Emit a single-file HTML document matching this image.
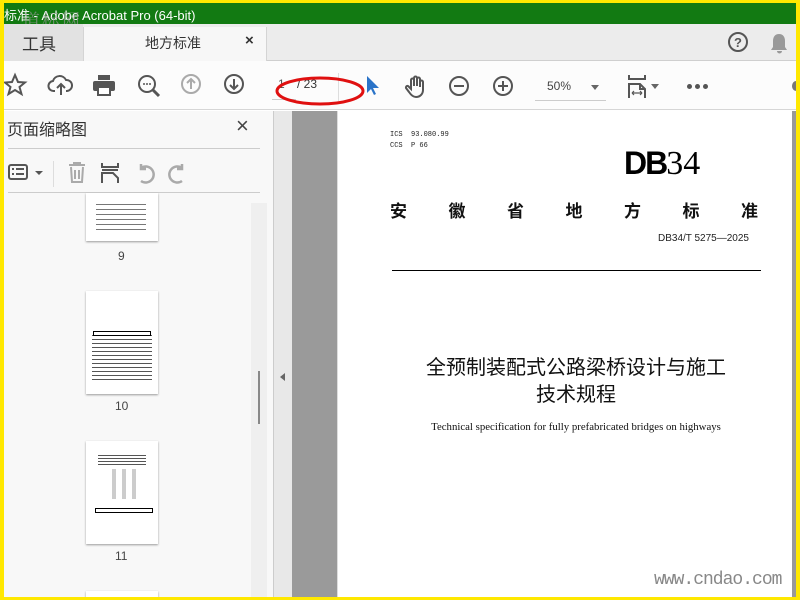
<!DOCTYPE html><html><head><meta charset="utf-8"><style>
*{margin:0;padding:0;box-sizing:border-box}
body{width:800px;height:600px;overflow:hidden;background:#ffe800;position:relative;font-family:"Liberation Sans","Noto Sans CJK SC",sans-serif}
.a{position:absolute}
svg{position:absolute;overflow:visible}
.ic{fill:none;stroke:#555;stroke-width:2}
</style></head><body>
<div class="a" style="left:4px;top:3px;width:792px;height:594px;background:#fff;overflow:hidden">
<div class="a" style="left:0;top:0;width:792px;height:21px;background:#127a12"></div>
<div class="a" style="left:0;top:2px;color:#fff;font-size:13px;white-space:nowrap">标准 - Adobe Acrobat Pro (64-bit)</div>
<div class="a" style="left:18px;top:4px;color:rgba(150,150,150,.7);font-size:18px;letter-spacing:2px;font-family:'Noto Serif CJK SC',serif">道标网</div>
<div class="a" style="left:0;top:21px;width:792px;height:37px;background:#ececec;border-bottom:1px solid #cfcfcf"></div>
<div class="a" style="left:0;top:21px;width:79px;height:37px;background:#e2e2e2"></div>
<div class="a" style="left:18px;top:27px;font-size:17px;color:#333">工具</div>
<div class="a" style="left:79px;top:24px;width:184px;height:35px;background:#f7f7f7;border-left:1px solid #d4d4d4;border-right:1px solid #d4d4d4"></div>
<div class="a" style="left:141px;top:30px;font-size:14px;color:#333">地方标准</div>
<div class="a" style="left:241px;top:29px;font-size:15px;color:#333;font-weight:bold">×</div>
<svg style="left:724px;top:29px" width="22" height="22"><circle cx="10" cy="10" r="9" class="ic"/><text x="10" y="15" font-size="13" font-weight="bold" text-anchor="middle" fill="#555" font-family="Liberation Sans">?</text></svg>
<svg style="left:766px;top:30px" width="20" height="22"><path d="M9 1c-4 0-6 3-6 7v6l-2 3h16l-2-3V8c0-4-2-7-6-7zM7 18a2.5 2.5 0 0 0 5 0z" fill="#999"/></svg>
<div class="a" style="left:0;top:58px;width:792px;height:49px;background:#fcfcfc;border-bottom:1px solid #d6d6d6"></div>
<svg style="left:0;top:70px" width="24" height="24"><path class="ic" d="M11 2l3 7 7 .5-5.5 4.5 2 7-6.5-4-6.5 4 2-7L1 9.5 8 9z"/></svg>
<svg style="left:44px;top:70px" width="26" height="26"><path class="ic" d="M7 18H6a5 5 0 0 1-1-10 7 7 0 0 1 13-1 5 5 0 0 1 1 11h-1M13 22V11M9 15l4-4 4 4"/></svg>
<svg style="left:88px;top:71px" width="24" height="24"><rect x="6" y="1" width="12" height="5" fill="#555"/><rect x="1" y="7" width="22" height="10" rx="2" fill="#555"/><rect x="6" y="13" width="12" height="8" fill="#fff" stroke="#555" stroke-width="2"/></svg>
<svg style="left:133px;top:71px" width="26" height="26"><circle cx="10" cy="10" r="8" class="ic"/><path d="M16 16l6 6" stroke="#555" stroke-width="3"/><circle cx="7" cy="10" r="1" fill="#555"/><circle cx="10" cy="10" r="1" fill="#555"/><circle cx="13" cy="10" r="1" fill="#555"/></svg>
<svg style="left:177px;top:71px" width="24" height="24"><circle cx="10" cy="10" r="9" fill="none" stroke="#aaa" stroke-width="2"/><path d="M10 15V5M6 9l4-4 4 4" fill="none" stroke="#aaa" stroke-width="2"/></svg>
<svg style="left:220px;top:71px" width="24" height="24"><circle cx="10" cy="10" r="9" class="ic"/><path d="M10 5v10M6 11l4 4 4-4" class="ic"/></svg>
<div class="a" style="left:268px;top:72px;width:24px;height:25px;border-bottom:1px solid #ccc"></div>
<div class="a" style="left:274px;top:74px;font-size:12px;color:#555">1</div>
<div class="a" style="left:293px;top:74px;font-size:12px;color:#333">/ 23</div>
<div class="a" style="left:334px;top:70px;width:1px;height:28px;background:#ddd"></div>
<svg style="left:362px;top:72px" width="16" height="22"><path d="M1 1v17l4-4 3 6 2-1-3-6h6z" fill="#2a73c8"/></svg>
<svg style="left:401px;top:72px" width="24" height="24"><path class="ic" d="M6 14V5a1.5 1.5 0 0 1 3 0v6V3a1.5 1.5 0 0 1 3 0v8V4a1.5 1.5 0 0 1 3 0v8V7a1.5 1.5 0 0 1 3 0v8c0 4-3 7-7 7-3 0-5-2-7-5l-3-4a1.5 1.5 0 0 1 3-1z"/></svg>
<svg style="left:445px;top:73px" width="22" height="22"><circle cx="10" cy="10" r="9" class="ic"/><path d="M5 10h10" class="ic"/></svg>
<svg style="left:489px;top:73px" width="22" height="22"><circle cx="10" cy="10" r="9" class="ic"/><path d="M5 10h10M10 5v10" class="ic"/></svg>
<div class="a" style="left:531px;top:74px;width:71px;height:24px;border-bottom:1px solid #ccc"></div>
<div class="a" style="left:543px;top:76px;font-size:12px;color:#444">50%</div>
<div class="a" style="left:587px;top:82px;border:4px solid transparent;border-top:5px solid #666"></div>
<svg style="left:624px;top:72px" width="20" height="24"><path class="ic" d="M1 0v4h16V0M1 23V9h11l5 5v9M12 9v5h5" /><path d="M4 18h10M4 18l2-2M4 18l2 2M14 18l-2-2M14 18l-2 2" stroke="#555" stroke-width="1.2" fill="none"/></svg>
<div class="a" style="left:647px;top:81px;border:4px solid transparent;border-top:5px solid #666"></div>
<div class="a" style="left:683px;top:81px;width:5px;height:5px;border-radius:50%;background:#555;box-shadow:8px 0 #555,16px 0 #555"></div>
<div class="a" style="left:788px;top:78px;width:8px;height:10px;border-radius:50%;background:#777"></div>
<div class="a" style="left:0;top:108px;width:269px;height:486px;background:#f8f8f8"></div>
<div class="a" style="left:3px;top:113px;font-size:16px;color:#333">页面缩略图</div>
<div class="a" style="left:232px;top:110px;font-size:22px;color:#444">×</div>
<div class="a" style="left:4px;top:145px;width:252px;height:1px;background:#ccc"></div>
<svg style="left:4px;top:161px" width="40" height="20"><rect x="1" y="1" width="18" height="14" rx="2" class="ic"/><path d="M4 5h2M4 10h2M8 5h8M8 10h8" stroke="#555" stroke-width="2"/><path d="M27 7l4 4 4-4z" fill="#555"/></svg>
<div class="a" style="left:49px;top:158px;width:1px;height:26px;background:#ddd"></div>
<svg style="left:63px;top:159px" width="22" height="22"><path d="M2 3h16M7 3V1h6v2M4 5l1 15h10l1-15M8 8v9M12 8v9" fill="none" stroke="#aaa" stroke-width="2"/></svg>
<svg style="left:96px;top:159px" width="22" height="22"><path d="M2 1v4h16V1M2 8h16M2 21V11h11l5 5v5" fill="none" stroke="#555" stroke-width="2"/></svg>
<svg style="left:131px;top:160px" width="22" height="22"><path d="M6 18a8 8 0 1 0 0-13M6 1v5h5" fill="none" stroke="#aaa" stroke-width="2.5"/></svg>
<svg style="left:164px;top:160px" width="22" height="22"><path d="M14 18a8 8 0 1 1 0-13M14 1v5H9" fill="none" stroke="#aaa" stroke-width="2.5"/></svg>
<div class="a" style="left:4px;top:189px;width:252px;height:1px;background:#ccc"></div>
<div class="a" style="left:247px;top:200px;width:16px;height:394px;background:#efefef"></div>
<div class="a" style="left:254px;top:368px;width:2px;height:53px;background:#888"></div>
<div class="a" style="left:82px;top:190px;width:72px;height:48px;background:#fff;box-shadow:0 1px 2px #999;background-image:repeating-linear-gradient(#fff 0 3px,#777 3px 4px,#fff 4px 5px);background-size:50px 30px;background-repeat:no-repeat;background-position:10px 8px"></div>
<div class="a" style="left:114px;top:246px;font-size:12px;color:#444">9</div>
<div class="a" style="left:82px;top:288px;width:72px;height:103px;background:#fff;box-shadow:0 1px 2px #999"><div class="a" style="left:6px;top:42px;width:60px;height:50px;background:repeating-linear-gradient(#fff 0 2px,#555 2px 3px,#fff 3px 4px)"></div><div class="a" style="left:7px;top:40px;width:58px;height:5px;border:1px solid #000"></div></div>
<div class="a" style="left:111px;top:396px;font-size:12px;color:#444">10</div>
<div class="a" style="left:82px;top:438px;width:72px;height:103px;background:#fff;box-shadow:0 1px 2px #999"><div class="a" style="left:12px;top:12px;width:48px;height:12px;background:repeating-linear-gradient(#fff 0 2px,#555 2px 3px)"></div><div class="a" style="left:20px;top:28px;width:34px;height:30px;background:repeating-linear-gradient(90deg,#fff 0 6px,#ccc 6px 10px)"></div><div class="a" style="left:9px;top:67px;width:58px;height:5px;border:1px solid #000"></div></div>
<div class="a" style="left:111px;top:546px;font-size:12px;color:#444">11</div>
<div class="a" style="left:82px;top:588px;width:72px;height:10px;background:#fff;box-shadow:0 1px 2px #999"></div>
<div class="a" style="left:269px;top:108px;width:19px;height:486px;background:#e8e8e8;border-left:1px solid #ccc"></div>
<div class="a" style="left:276px;top:370px;border:4px solid transparent;border-right:5px solid #666;border-left:0"></div>
<div class="a" style="left:288px;top:108px;width:45px;height:486px;background:#9a9a9a"></div>
<div class="a" style="left:333px;top:108px;width:1px;height:486px;background:#ddd"></div>
<div class="a" style="left:788px;top:108px;width:4px;height:486px;background:#999"></div>
<div class="a" style="left:386px;top:127px;font-size:7px;color:#222;font-family:'Liberation Mono',monospace;line-height:11px">ICS&nbsp; 93.080.99<br>CCS&nbsp; P 66</div>
<div class="a" style="left:620px;top:143px;font-size:34px;color:#000;font-family:'Liberation Serif',serif;line-height:34px;white-space:nowrap"><span style="font-family:'Liberation Sans';font-weight:900;letter-spacing:-2px;font-size:32px">DB</span>34</div>
<div class="a" style="left:386px;top:194px;width:368px;display:flex;justify-content:space-between;font-size:17px;color:#111;font-weight:bold">
<span>安</span><span>徽</span><span>省</span><span>地</span><span>方</span><span>标</span><span>准</span></div>
<div class="a" style="left:654px;top:230px;font-size:10px;color:#222">DB34/T 5275—2025</div>
<div class="a" style="left:388px;top:267px;width:369px;height:1px;background:#000"></div>
<div class="a" style="left:345px;top:352px;width:454px;text-align:center;font-size:20px;line-height:27px;color:#111">全预制装配式公路梁桥设计与施工<br>技术规程</div>
<div class="a" style="left:345px;top:418px;width:454px;text-align:center;font-size:10.8px;color:#111;font-family:'Liberation Serif',serif">Technical specification for fully prefabricated bridges on highways</div>
<div class="a" style="left:650px;top:567px;font-size:18px;color:#888;font-family:'Liberation Mono',monospace;letter-spacing:-1px">www.cndao.com</div>
<svg style="left:0;top:0" width="792" height="594"><ellipse cx="316" cy="88" rx="43" ry="13" fill="none" stroke="#e01010" stroke-width="3"/></svg>
</div>
</body></html>
